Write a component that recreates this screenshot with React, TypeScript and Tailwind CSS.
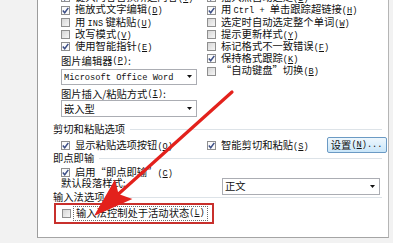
import React from "react";

const MONO = "font-['Liberation_Mono','Noto_Sans_CJK_SC',monospace]";

function Mn({ c }: { c: string }) {
  return (
    <span className={`${MONO} text-[8.6px]`}>
      (<span className="underline underline-offset-[1px]">{c}</span>)
    </span>
  );
}

function Lat({ t }: { t: string }) {
  return <span className={`${MONO} text-[8.6px]`}>{t}</span>;
}

function Cb({ checked }: { checked?: boolean }) {
  return (
    <span
      className={`relative inline-flex items-center justify-center w-[9px] h-[9px] shrink-0 border border-[#8f8f8f] ${
        checked ? "bg-[#fbfbfb]" : "bg-gradient-to-br from-[#d6d6d6] to-[#f6f6f6]"
      }`}
    >
      {checked && (
        <svg width="7" height="7" viewBox="0 0 7 7">
          <path d="M0.8 3.6 L2.7 5.8 L6.3 0.9" fill="none" stroke="#3d4f86" strokeWidth="1.5" />
        </svg>
      )}
    </span>
  );
}

function Row({ checked, children }: { checked?: boolean; children: React.ReactNode }) {
  return (
    <div className="h-[12.2px] flex items-center whitespace-nowrap">
      <Cb checked={checked} />
      <span className="ml-[5px]">{children}</span>
    </div>
  );
}

function Arrow() {
  return (
    <svg width="5" height="3" viewBox="0 0 5 3">
      <path d="M0 0 H5 L2.5 3 Z" fill="#111" />
    </svg>
  );
}

function Sel({ w, h, children }: { w: number; h: number; children: React.ReactNode }) {
  return (
    <div
      className="flex items-center border border-[#abadb3] bg-white pl-[2px] pr-[4px]"
      style={{ width: w, height: h }}
    >
      <div className="flex-1 whitespace-nowrap overflow-hidden">{children}</div>
      <Arrow />
    </div>
  );
}

function Header({ children, className = "" }: { children: React.ReactNode; className?: string }) {
  return (
    <div className={`h-[12px] flex items-center whitespace-nowrap ${className}`}>
      <span>{children}</span>
      <div className="flex-1 h-px bg-[#dde3e8] ml-[5px] mr-[6px]" />
    </div>
  );
}

export default function App() {
  return (
    <div className="relative w-[393px] h-[243px] overflow-hidden bg-[#f2f2f2] font-['Noto_Sans_CJK_SC',sans-serif] text-[10.3px] leading-none text-[#111]">
      <div className="flex pl-[37px]">
        <div className="mt-[-10px] w-[352px] h-[248px] bg-white border-l border-r border-b border-l-[#9c9c9c] border-r-[#b5b5b5] border-b-[#a5a5a5] pl-[15px] pt-[1.9px]">
          {/* two columns */}
          <div className="flex pl-[8px]">
            <div className="w-[146px] flex flex-col">
              <Row checked>键入内容替换所选内容<Mn c="T" /></Row>
              <Row checked>拖放式文字编辑<Mn c="D" /></Row>
              <Row>用 <Lat t="INS" /> 键粘贴<Mn c="U" /></Row>
              <Row>改写模式<Mn c="V" /></Row>
              <Row checked>使用智能指针<Mn c="E" /></Row>
              <div className="h-[13px] mt-[2.3px] flex items-center whitespace-nowrap">
                图片编辑器<Mn c="P" />:
              </div>
              <div className="mt-[0.8px]">
                <Sel w={136} h={16}>
                  <span className={`${MONO} text-[8.7px]`}>Microsoft Office Word</span>
                </Sel>
              </div>
              <div className="h-[12px] mt-[3px] flex items-center whitespace-nowrap">
                图片插入/粘贴方式<Mn c="I" />:
              </div>
              <div className="mt-[0.5px]">
                <Sel w={136} h={17}>嵌入型</Sel>
              </div>
            </div>
            <div className="flex flex-col">
              <Row checked>插入点自动选定<Mn c="S" /></Row>
              <Row checked>用 <Lat t="Ctrl + " />单击跟踪超链接<Mn c="H" /></Row>
              <Row>选定时自动选定整个单词<Mn c="W" /></Row>
              <Row>提示更新样式<Mn c="Y" /></Row>
              <Row>标记格式不一致错误<Mn c="F" /></Row>
              <Row checked>保持格式跟踪<Mn c="K" /></Row>
              <Row>“自动键盘”切换<Mn c="B" /></Row>
            </div>
          </div>

          <Header className="mt-[6px]">剪切和粘贴选项</Header>
          <div className="flex pl-[8px] mt-[4px] h-[12px] items-center">
            <div className="w-[146px]">
              <Row checked>显示粘贴选项按钮<Mn c="O" /></Row>
            </div>
            <div className="flex items-center">
              <Row checked>智能剪切和粘贴<Mn c="S" /></Row>
              <div className="ml-[18px] -my-[3px] w-[60px] h-[16px] flex items-center justify-center rounded-[2px] border border-[#6b9ac4] bg-gradient-to-b from-[#eef7fd] to-[#c9e6f9] whitespace-nowrap">
                设置<Mn c="N" /><span className={`${MONO} text-[8.6px]`}>...</span>
              </div>
            </div>
          </div>

          <Header className="mt-[1px]">即点即输</Header>
          <div className="pl-[8px] mt-[2px]">
            <Row checked>启用“即点即输”<Mn c="C" /></Row>
          </div>
          <div className="pl-[8px] mt-[-1px] h-[17px] flex items-center">
            <div className="w-[161px] pb-[5px] whitespace-nowrap">默认段落样式:</div>
            <Sel w={158} h={17}>正文</Sel>
          </div>

          <Header className="mt-[-3px]">输入法选项</Header>
          <div className="ml-[1px] mt-[-1px] w-[160px] h-[21px] border-2 border-[#c8302c] flex items-center pl-[6px]">
            <Cb />
            <span className="ml-[2px] border border-dotted border-[#6a6a6a] px-[2px] h-[15px] flex items-center whitespace-nowrap">
              输入法控制处于活动状态<Mn c="L" />
            </span>
          </div>
        </div>
      </div>

      {/* red annotation arrow */}
      <svg className="absolute left-0 top-0 pointer-events-none" width="393" height="243" viewBox="0 0 393 243">
        <line x1="232" y1="92" x2="119" y2="193.5" stroke="#e3211c" strokeWidth="3.2" strokeLinecap="round" />
        <polygon points="94,216 132.4,199 118.5,194 115,179.6" fill="#e3211c" />
      </svg>
    </div>
  );
}
